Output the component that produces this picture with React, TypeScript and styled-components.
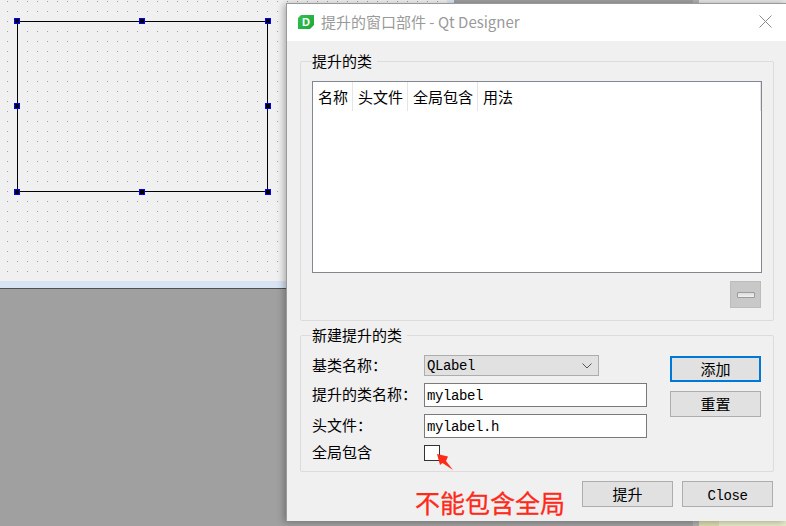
import React from 'react';
import styled, { createGlobalStyle } from 'styled-components';

const UI_FONT = '"Noto Sans CJK SC", "Noto Sans", sans-serif';
const MONO_FONT = '"Liberation Mono", "Noto Sans CJK SC", monospace';

const GlobalStyle = createGlobalStyle`
  html, body {
    margin: 0;
    padding: 0;
    overflow: hidden;
  }
`;

const Desktop = styled.div`
  position: relative;
  display: flex;
  width: 786px;
  height: 526px;
  overflow: hidden;
  font-family: ${UI_FONT};
  font-size: 15px;
  color: #000;
  background: #a0a0a0;
`;

// Qt Designer MDI area, mostly hidden behind the dialog
const MdiArea = styled.div`
  flex: 0 0 693px;
  background: #a0a0a0;
`;

const FormWindow = styled.div`
  display: flex;
  width: 454px;
  height: 288px;
  border-bottom: 1px solid #505050;
`;

const FormColumn = styled.div`
  flex: 0 0 447px;
  display: flex;
  flex-direction: column;
`;

const DotCanvas = styled.div`
  flex: 1;
  padding: 21px 0 0 17px;
  box-sizing: border-box;
  background-color: #f0f0f0;
  background-image: radial-gradient(
    circle at 0.5px 0.5px,
    #a0a0a0 0.6px,
    transparent 0.6px
  );
  background-size: 10px 10px;
  background-position: 7px 1px;
`;

const StatusStrip = styled.div`
  flex: 0 0 7px;
  background: #d8e4f2;
`;

const SideStrip = styled.div`
  flex: 1;
  background: #d8e4f2;
`;

const Selection = styled.div`
  position: relative;
  box-sizing: border-box;
  width: 251px;
  height: 171px;
  border: 1px solid #000;
`;

const HANDLE_X = { start: '-4px', mid: '121px', end: '247px' };
const HANDLE_Y = { start: '-4px', mid: '81px', end: '167px' };

const Handle = styled.span<{
  $x: keyof typeof HANDLE_X;
  $y: keyof typeof HANDLE_Y;
}>`
  position: absolute;
  left: ${(p) => HANDLE_X[p.$x]};
  top: ${(p) => HANDLE_Y[p.$y]};
  box-sizing: border-box;
  width: 6px;
  height: 6px;
  background: #000;
  border: 1px solid #0000ff;
`;

const RightDock = styled.div`
  flex: 1;
  display: flex;
  flex-direction: column;
  justify-content: space-between;
  background: #f4f4f4;
`;

const DockEdge = styled.div<{ $bottom?: boolean }>`
  display: flex;
  height: 5px;
  background: ${(p) =>
    p.$bottom
      ? 'linear-gradient(90deg, #ddddb0 0 26px, #e8ecc8 26px)'
      : '#e6e6e6'};
`;

const DockGap = styled.div`
  flex: 0 0 6px;
  background: #b0b0b0;
`;

// Floating dialog
const Dialog = styled.div`
  position: absolute;
  left: 286px;
  top: 3px;
  width: 500px;
  height: 518px;
  box-sizing: border-box;
  border-left: 1px solid #9a9a9a;
  border-top: 1px solid #9a9a9a;
  background: #f0f0f0;
  box-shadow: -2px 1px 7px rgba(0, 0, 0, 0.3);
`;

const TitleBar = styled.div`
  display: flex;
  align-items: center;
  box-sizing: border-box;
  height: 37px;
  padding: 0 14px 2px 11px;
  background: #fff;
`;

const AppIcon = styled.div`
  display: flex;
  align-items: center;
  justify-content: center;
  width: 16px;
  height: 14px;
  margin: 1px 7px 0 0;
  clip-path: polygon(3px 0, 100% 0, 100% 10px, 12px 100%, 0 100%, 0 3px);
  background: linear-gradient(135deg, #35c04f, #1aa83a);
  color: #fff;
  font-family: 'Liberation Sans', sans-serif;
  font-size: 11px;
  font-weight: 700;
`;

const TitleText = styled.div`
  font-family: 'Noto Sans CJK SC', 'Open Sans', sans-serif;
  font-size: 15px;
  line-height: 20px;
  color: #9a9a9a;
`;

const CloseGlyph = styled.svg`
  margin-left: auto;
  display: block;
`;

const DialogBody = styled.div`
  display: flex;
  flex-direction: column;
  padding: 10px 12px 0 13px;
`;

const Group = styled.fieldset`
  box-sizing: border-box;
  min-width: 0;
  margin: 0;
  padding: 10px 12px 0 11px;
  border: 1px solid #dcdcdc;
  border-radius: 2px;
`;

const GroupTitle = styled.legend`
  padding: 0 5px 0 0;
  margin-left: 0;
  font-size: 15px;
  line-height: 20px;
`;

const PromotedGroup = styled(Group)`
  height: 270px;
`;

const NewClassGroup = styled(Group)`
  height: 147px;
  margin-top: 4px;
`;

const ClassTable = styled.div`
  box-sizing: border-box;
  width: 450px;
  height: 192px;
  background: #fff;
  border: 1px solid #828790;
`;

const TableHeader = styled.div`
  display: flex;
  height: 29px;
  border-right: 1px solid #e5e5e5;
`;

const HeaderCell = styled.div`
  padding: 0 4px 0 5px;
  font-size: 15px;
  line-height: 30px;
  border-right: 1px solid #e5e5e5;

  &:last-child {
    border-right: 0;
  }
`;

const TableActions = styled.div`
  display: flex;
  justify-content: flex-end;
  margin-top: 8px;
`;

const RemoveButton = styled.button`
  display: flex;
  align-items: center;
  justify-content: center;
  box-sizing: border-box;
  width: 31px;
  height: 27px;
  padding: 0;
  background: #c8c8c8;
  border: 1px solid #bcbcbc;
`;

const MinusBar = styled.span`
  display: block;
  box-sizing: border-box;
  width: 18px;
  height: 6px;
  border: 1px solid #9c9c9c;
  border-radius: 1px;
  background: linear-gradient(#dcdcdc, #f0f0f0);
`;

const NewClassLayout = styled.div`
  display: flex;
  gap: 23px;
`;

const FormGrid = styled.div`
  display: grid;
  grid-template-columns: 112px 223px;
  grid-template-rows: 21px 24px 24px 16px;
  row-gap: 7px;
  align-items: center;
`;

const FieldLabel = styled.label`
  font-size: 15px;
  line-height: 20px;
  white-space: nowrap;
  margin-top: -2px;
`;

const ComboBox = styled.div`
  display: flex;
  align-items: center;
  justify-content: space-between;
  box-sizing: border-box;
  width: 175px;
  height: 21px;
  padding: 1px 6px 0 2px;
  background: #e1e1e1;
  border: 1px solid #adadad;
  font-family: ${MONO_FONT};
  font-size: 14px;
  letter-spacing: -0.4px;
`;

const LineEdit = styled.input`
  box-sizing: border-box;
  width: 223px;
  height: 24px;
  padding: 2px 2px 0;
  margin: 0;
  background: #fff;
  border: 1px solid #7a7a7a;
  border-radius: 0;
  outline: none;
  font-family: ${MONO_FONT};
  font-size: 14px;
  letter-spacing: -0.4px;
  color: #000;
`;

const CheckCell = styled.div`
  position: relative;
  height: 16px;
`;

const CheckBox = styled.div`
  box-sizing: border-box;
  width: 16px;
  height: 16px;
  background: #fff;
  border: 1px solid #333;
`;

const PointerArrow = styled.svg`
  position: absolute;
  left: 12px;
  top: 8px;
  display: block;
`;

const ButtonColumn = styled.div`
  display: flex;
  flex-direction: column;
  gap: 9px;
  padding-top: 1px;
`;

const PushButton = styled.button<{ $default?: boolean; $mono?: boolean }>`
  box-sizing: border-box;
  width: 91px;
  height: 26px;
  padding: ${(p) => (p.$mono ? '3px 0 0' : '0 0 2px')};
  background: #e1e1e1;
  border: ${(p) => (p.$default ? '2px solid #0078d7' : '1px solid #adadad')};
  border-radius: 0;
  font-family: ${(p) => (p.$mono ? MONO_FONT : UI_FONT)};
  font-size: ${(p) => (p.$mono ? '14px' : '15px')};
  letter-spacing: ${(p) => (p.$mono ? '-0.4px' : '0')};
  color: #000;
`;

const DialogFooter = styled.div`
  display: flex;
  align-items: flex-start;
  gap: 9px;
  margin-top: 9px;
`;

const Annotation = styled.div`
  margin: 7px 8px 0 115px;
  font-size: 25px;
  line-height: 28px;
  color: #ff2a1a;
  white-space: nowrap;
  -webkit-text-stroke: 0.3px #ff2a1a;
`;

const HANDLES = [
  { x: 'start', y: 'start' },
  { x: 'mid', y: 'start' },
  { x: 'end', y: 'start' },
  { x: 'start', y: 'mid' },
  { x: 'end', y: 'mid' },
  { x: 'start', y: 'end' },
  { x: 'mid', y: 'end' },
  { x: 'end', y: 'end' },
] as const;

const COLUMNS = ['名称', '头文件', '全局包含', '用法'];

export default function App() {
  return (
    <Desktop>
      <GlobalStyle />
      <MdiArea>
        <FormWindow>
          <FormColumn>
            <DotCanvas>
              <Selection>
                {HANDLES.map((h) => (
                  <Handle key={`${h.x}-${h.y}`} $x={h.x} $y={h.y} />
                ))}
              </Selection>
            </DotCanvas>
            <StatusStrip />
          </FormColumn>
          <SideStrip />
        </FormWindow>
      </MdiArea>
      <RightDock>
        <DockEdge>
          <DockGap />
        </DockEdge>
        <DockEdge $bottom>
          <DockGap />
        </DockEdge>
      </RightDock>

      <Dialog>
        <TitleBar>
          <AppIcon>D</AppIcon>
          <TitleText>提升的窗口部件 - Qt Designer</TitleText>
          <CloseGlyph width="13" height="13" viewBox="0 0 13 13">
            <path d="M0.5 0.5 L12.5 12.5 M12.5 0.5 L0.5 12.5" stroke="#8a8a8a" strokeWidth="1" fill="none" />
          </CloseGlyph>
        </TitleBar>
        <DialogBody>
          <PromotedGroup>
            <GroupTitle>提升的类</GroupTitle>
            <ClassTable>
              <TableHeader>
                {COLUMNS.map((c) => (
                  <HeaderCell key={c}>{c}</HeaderCell>
                ))}
              </TableHeader>
            </ClassTable>
            <TableActions>
              <RemoveButton aria-label="remove">
                <MinusBar />
              </RemoveButton>
            </TableActions>
          </PromotedGroup>

          <NewClassGroup>
            <GroupTitle>新建提升的类</GroupTitle>
            <NewClassLayout>
              <FormGrid>
                <FieldLabel>基类名称：</FieldLabel>
                <ComboBox>
                  QLabel
                  <svg width="10" height="6" viewBox="0 0 10 6">
                    <path d="M0.5 0.5 L5 5 L9.5 0.5" stroke="#555" strokeWidth="1" fill="none" />
                  </svg>
                </ComboBox>
                <FieldLabel>提升的类名称：</FieldLabel>
                <LineEdit value="mylabel" readOnly />
                <FieldLabel>头文件：</FieldLabel>
                <LineEdit value="mylabel.h" readOnly />
                <FieldLabel>全局包含</FieldLabel>
                <CheckCell>
                  <CheckBox />
                  <PointerArrow width="18" height="18" viewBox="0 0 18 18">
                    <path d="M1 1 L12 3.5 L10 8 L17 17 L6.5 10 L4 12 Z" fill="#ff2a1a" />
                  </PointerArrow>
                </CheckCell>
              </FormGrid>
              <ButtonColumn>
                <PushButton $default>添加</PushButton>
                <PushButton>重置</PushButton>
              </ButtonColumn>
            </NewClassLayout>
          </NewClassGroup>

          <DialogFooter>
            <Annotation>不能包含全局</Annotation>
            <PushButton>提升</PushButton>
            <PushButton $mono>Close</PushButton>
          </DialogFooter>
        </DialogBody>
      </Dialog>
    </Desktop>
  );
}
